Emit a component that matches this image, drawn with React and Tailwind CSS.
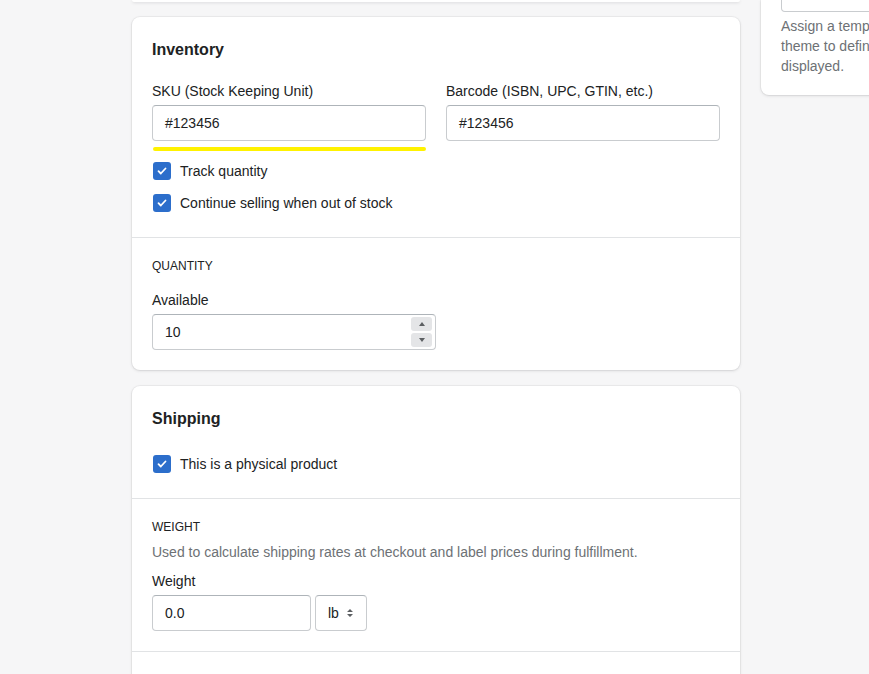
import React from 'react';

const font = { fontFamily: '"Liberation Sans", Arial, sans-serif' };

function Check({ label }) {
  return (
    <label className="flex items-center gap-[9px] h-5 text-sm text-[#202223]">
      <span className="w-[18px] h-[18px] rounded-[3px] bg-[#2c6ecb] flex items-center justify-center ml-px">
        <svg width="12" height="12" viewBox="0 0 12 12" fill="none">
          <path d="M2.5 6.2l2.3 2.3 4.7-5" stroke="white" strokeWidth="1.8" strokeLinecap="round" strokeLinejoin="round" />
        </svg>
      </span>
      {label}
    </label>
  );
}

function TextInput({ value, className = '' }) {
  return (
    <div className={`h-9 border border-[#c9cccf] border-t-[#aeb4b9] rounded-[4px] bg-white flex items-center px-3 text-sm text-[#202223] ${className}`}>
      {value}
    </div>
  );
}

function Card({ children }) {
  return (
    <div className="bg-white rounded-lg shadow-[0_0_0_1px_rgba(63,63,68,0.05),0_1px_3px_rgba(63,63,68,0.15)]">
      {children}
    </div>
  );
}

export default function App() {
  return (
    <div className="min-h-screen bg-[#f6f6f7] overflow-hidden text-[#202223]" style={font}>
      <div className="flex gap-[21px] pl-[132px] w-[1200px]">
        <div className="w-[608px] shrink-0 flex flex-col">
          <div className="h-[2px] bg-white rounded-b-lg shadow-[0_1px_3px_rgba(63,63,68,0.15)]" />

          <div className="mt-[15px]">
            <Card>
              <div className="px-5 pt-5 pb-6">
                <h2 className="text-base leading-6 font-semibold mt-px">Inventory</h2>
                <div className="grid grid-cols-2 gap-5 mt-[19px]">
                  <div>
                    <div className="text-sm leading-5 mb-1">SKU (Stock Keeping Unit)</div>
                    <TextInput value="#123456" />
                    <div className="h-1 bg-[#fff200] rounded-full mt-[6px] ml-px" />
                  </div>
                  <div>
                    <div className="text-sm leading-5 mb-1">Barcode (ISBN, UPC, GTIN, etc.)</div>
                    <TextInput value="#123456" />
                  </div>
                </div>
                <div className="flex flex-col gap-3 mt-[10px]">
                  <Check label="Track quantity" />
                  <Check label="Continue selling when out of stock" />
                </div>
              </div>
              <div className="border-t border-[#e1e3e5] px-5 pt-5 pb-5">
                <div className="text-xs leading-4 font-medium uppercase">Quantity</div>
                <div className="text-sm leading-5 mt-4 mb-1">Available</div>
                <div className="w-[284px] h-9 border border-[#c9cccf] border-t-[#aeb4b9] rounded-[4px] flex items-center pl-3 pr-[3px] text-sm">
                  <span className="flex-1">10</span>
                  <div className="flex flex-col gap-[2px]">
                    <span className="w-[21px] h-[14px] bg-[#e4e5e7] rounded-[3px] flex items-center justify-center">
                      <svg width="6" height="4" viewBox="0 0 6 4"><path d="M0 4L3 0L6 4Z" fill="#5c5f62" /></svg>
                    </span>
                    <span className="w-[21px] h-[14px] bg-[#e4e5e7] rounded-[3px] flex items-center justify-center">
                      <svg width="6" height="4" viewBox="0 0 6 4"><path d="M0 0L3 4L6 0Z" fill="#5c5f62" /></svg>
                    </span>
                  </div>
                </div>
              </div>
            </Card>
          </div>

          <div className="mt-4">
            <Card>
              <div className="px-5 pt-5 pb-6">
                <h2 className="text-base leading-6 font-semibold mt-px">Shipping</h2>
                <div className="mt-[23px]">
                  <Check label="This is a physical product" />
                </div>
              </div>
              <div className="border-t border-[#e1e3e5] px-5 pt-5 pb-5">
                <div className="text-xs leading-4 font-medium uppercase">Weight</div>
                <div className="text-sm leading-5 text-[#6d7175] mt-[7px]">
                  Used to calculate shipping rates at checkout and label prices during fulfillment.
                </div>
                <div className="text-sm leading-5 mt-[9px] mb-1">Weight</div>
                <div className="flex gap-1">
                  <TextInput value="0.0" className="w-[159px]" />
                  <div className="w-[52px] h-9 border border-[#c9cccf] border-t-[#aeb4b9] rounded-[4px] flex items-center pl-3 gap-[7px] text-sm">
                    lb
                    <svg width="8" height="10" viewBox="0 0 8 10">
                      <path d="M1 4L4 1L7 4Z M1 6L4 9L7 6Z" fill="#5c5f62" />
                    </svg>
                  </div>
                </div>
              </div>
              <div className="border-t border-[#e1e3e5] h-10" />
            </Card>
          </div>
        </div>

        <div className="w-[300px] shrink-0">
          <div className="bg-white rounded-b-lg shadow-[0_0_0_1px_rgba(63,63,68,0.05),0_1px_3px_rgba(63,63,68,0.15)] px-5 pb-[19px]">
            <div className="h-[12px] border border-t-0 border-[#c9cccf] rounded-b-[4px]" />
            <p className="text-sm leading-5 text-[#6d7175] mt-[4px]">
              Assign a template from your
              <br />
              theme to define how the product is
              <br />
              displayed.
            </p>
          </div>
        </div>
      </div>
    </div>
  );
}
